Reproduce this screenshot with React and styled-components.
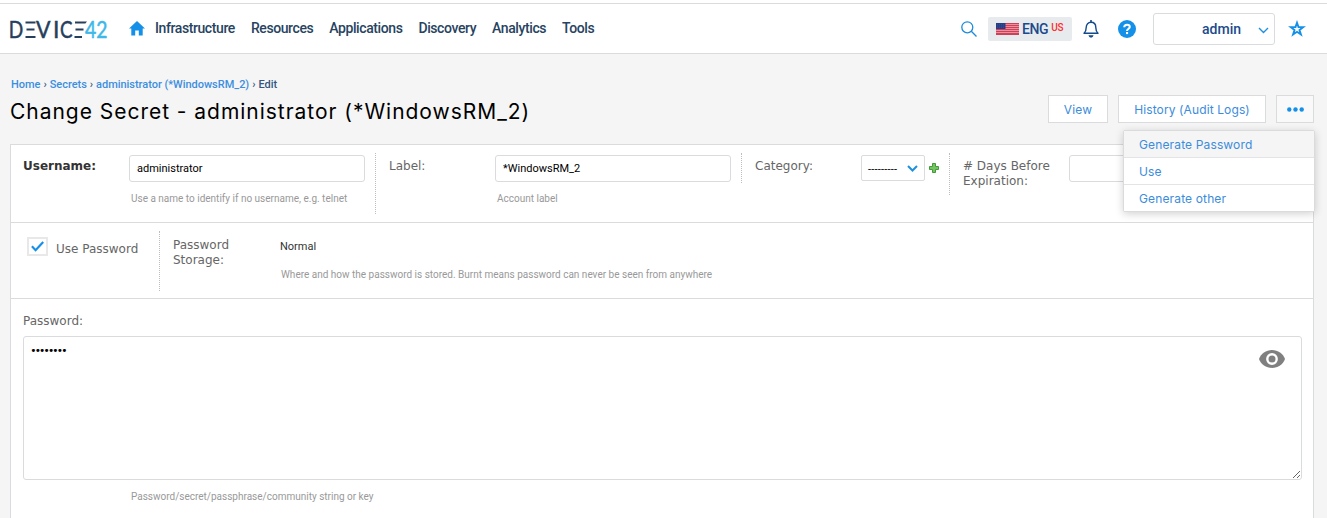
import React from 'react';
import styled, { createGlobalStyle } from 'styled-components';

const Global = createGlobalStyle`
  * { box-sizing: border-box; }
  html, body { margin: 0; height: 100%; overflow: hidden; background: #f5f5f5; }
  body { font-family: Roboto, sans-serif; color: #000; }
  svg { display: block; flex: none; }
  button, input, textarea { font-family: inherit; margin: 0; }
`;

const Page = styled.div`
  height: 518px;
  overflow: hidden;
  display: flex;
  flex-direction: column;
`;

const TopBar = styled.header`
  flex: none;
  height: 54px;
  display: flex;
  align-items: center;
  padding: 4px 21px 0 10px;
  background: linear-gradient(#fff 3px, #d9dbdc 3px, #d9dbdc 4px, #fff 4px);
  border-bottom: 1px solid #d9dbdc;
`;

const HomeLink = styled.a`
  margin: 0 10px 0 19px;
`;

const Nav = styled.nav`
  display: flex;
  gap: 16px;
  flex: 1;
  padding-bottom: 1px;
`;

const NavItem = styled.a`
  font-size: 14px;
  line-height: 18px;
  font-weight: 500;
  letter-spacing: -0.41px;
  color: #27435f;
`;

const Tools = styled.div`
  display: flex;
  align-items: center;
`;

const Language = styled.div`
  width: 84px;
  height: 24px;
  margin: 0 11px;
  padding-left: 8px;
  display: flex;
  align-items: center;
  background: #e8ebee;
  border-radius: 2px;
  font-size: 14px;
  line-height: 24px;
  font-weight: 500;
  letter-spacing: -0.4px;
  color: #1c4a8c;
`;

const LangCode = styled.span`
  margin-left: 3px;
`;

const Region = styled.span`
  margin: -2px 0 0 3px;
  font-size: 10px;
  letter-spacing: -0.3px;
  color: #ff2d2d;
`;

const HelpLink = styled.a`
  margin: 1px 17px 0 19px;
`;

const UserMenu = styled.button`
  width: 122px;
  height: 32px;
  margin-right: 13px;
  padding: 0 5px 0 48px;
  display: flex;
  align-items: center;
  justify-content: space-between;
  background: #fff;
  border: 1px solid #d9dbdc;
  border-radius: 3px;
  font-size: 14px;
  font-weight: 500;
  color: #1c4a8c;
`;

const MenuArrow = styled.span`
  margin-top: 4px;
`;

const Heading = styled.section`
  flex: none;
  height: 90px;
  display: flex;
  justify-content: space-between;
  padding: 23px 13px 0 11px;
`;

const Crumbs = styled.div`
  display: flex;
  gap: 3px;
  padding-top: 1px;
  font-size: 11px;
  line-height: 14px;
  font-weight: 500;
  letter-spacing: -0.03px;
  color: #33557f;
`;

const CrumbLink = styled.a`
  color: #3b8ee0;
`;

const Title = styled.h1`
  margin: 7px 0 0 -1px;
  font-family: Inter, sans-serif;
  font-size: 21px;
  line-height: 26px;
  font-weight: 400;
  letter-spacing: 0.97px;
  white-space: nowrap;
`;

const Actions = styled.div`
  position: relative;
  display: flex;
  align-items: flex-start;
  gap: 10px;
  padding-top: 18px;
`;

const ActionButton = styled.button`
  width: ${(p) => p.$width}px;
  height: 28px;
  padding: 0;
  display: flex;
  align-items: center;
  justify-content: center;
  background: ${(p) => (p.$open ? '#f9f9f9' : '#fff')};
  border: 1px solid #d9dbdc;
  font-family: Inter, sans-serif;
  font-size: 12px;
  letter-spacing: 0.12px;
  color: #3c8cdc;
`;

const Menu = styled.div`
  position: absolute;
  top: 53px;
  right: -1px;
  z-index: 2;
  width: 192px;
  background: #fff;
  border: 1px solid #d9dbdc;
  border-radius: 2px;
  box-shadow: 0 2px 8px rgba(0, 0, 0, 0.18);
`;

const MenuItem = styled.a`
  display: block;
  height: 27px;
  padding: 1px 0 0 15px;
  background: ${(p) => (p.$active ? '#f5f5f5' : '#fff')};
  font-family: Inter, sans-serif;
  font-size: 12px;
  line-height: 25px;
  letter-spacing: 0.14px;
  color: #3c8cdc;
  & + & { border-top: 1px solid #e2e4e5; }
  &:first-child { height: 26px; }
`;

const Card = styled.form`
  flex: none;
  height: 400px;
  margin: 0 13px 0 10px;
  background: #fff;
  border: 1px solid #d9dbdc;
`;

const FormRow = styled.div`
  height: ${(p) => p.$height}px;
  display: flex;
  align-items: flex-start;
  padding: 8px 0 0 12px;
  border-bottom: 1px solid #d9dbdc;
`;

const Field = styled.div`
  width: ${(p) => p.$width}px;
  height: ${(p) => p.$height}px;
  flex: none;
  margin-right: 13px;
  display: flex;
  align-items: flex-start;
  border-right: ${(p) => (p.$last ? 'none' : '1px dotted #bdbdbd')};
`;

const Label = styled.label`
  width: 106px;
  flex: none;
  padding-top: ${(p) => p.$top || 6}px;
  font-family: 'DejaVu Sans', sans-serif;
  font-size: 12px;
  line-height: 15px;
  font-weight: ${(p) => (p.$required ? 700 : 400)};
  color: ${(p) => (p.$required ? '#333' : '#666')};
`;

const Control = styled.div`
  padding-top: 2px;
`;

const TextInput = styled.input`
  display: block;
  width: 236px;
  height: 27px;
  padding: 0 7px;
  background: #fff;
  border: 1px solid #d9dbdc;
  border-radius: 3px;
  font-size: 11px;
  color: #000;
  outline: none;
`;

const Help = styled.p`
  margin: 11px 0 0 2px;
  font-size: 10px;
  line-height: 12px;
  color: #999;
  white-space: nowrap;
`;

const SelectRow = styled(Control)`
  display: flex;
  align-items: center;
  gap: 4px;
`;

const Select = styled.div`
  width: 64px;
  height: 26px;
  padding: 0 6px;
  display: flex;
  align-items: center;
  justify-content: space-between;
  border: 1px solid #d9dbdc;
  border-radius: 2px;
  font-size: 11px;
  letter-spacing: 0.2px;
`;

const SelectValue = styled.span`
  padding-top: 2px;
`;

const Checkbox = styled.span`
  width: 21px;
  height: 19px;
  margin: 6px 8px 0 4px;
  flex: none;
  display: flex;
  align-items: center;
  justify-content: center;
  border: 2px solid #e8e8e8;
`;

const CheckLabel = styled(Label)`
  width: auto;
`;

const Value = styled.div`
  padding-top: 9px;
  margin-left: 1px;
  font-size: 11px;
  line-height: 14px;
  color: #333;
`;

const StorageHelp = styled(Help)`
  margin: 15px 0 0 2px;
`;

const PasswordSection = styled.div`
  padding: 9px 11px 0 12px;
`;

const AreaWrap = styled.div`
  position: relative;
  margin-top: 7px;
`;

const PasswordArea = styled.textarea`
  display: block;
  width: 100%;
  height: 144px;
  padding: 7px 7px;
  background: #fff;
  border: 1px solid #d9dbdc;
  border-radius: 3px;
  font-size: 13px;
  line-height: 14px;
  font-weight: 700;
  letter-spacing: -0.25px;
  color: #000;
  outline: none;
`;

const RevealButton = styled.a`
  position: absolute;
  top: 14px;
  right: 17px;
`;

const PasswordHelp = styled(Help)`
  margin-left: 108px;
`;

const Logo = () => (
  <svg width="100" height="32" viewBox="0 -7 100 32" overflow="visible">
    <g fill="none" stroke="#263f5c" strokeWidth="2">
      <path d="M15.500 2.500H25.500M16.500 9.500H24.500M15.500 17H25.500" />
      <path d="M65.500 9.500H73.500M64.500 17H72" />
    </g>
    <path fill="#263f5c" d="M65 1.500H77L75.300 3.500H65Z" />
    <g fontFamily="Lato, sans-serif" fontSize="23" fill="#263f5c" stroke="#263f5c" strokeWidth=".5">
      <text x="-1.300" y="18" textLength="14.500" lengthAdjust="spacingAndGlyphs">D</text>
      <text x="26" y="18" textLength="14.500" lengthAdjust="spacingAndGlyphs">V</text>
      <text x="43" y="18">I</text>
      <text x="50" y="18" textLength="12.500" lengthAdjust="spacingAndGlyphs">C</text>
      <text x="75" y="18" fill="#3db8e8" stroke="#3db8e8" textLength="22.500" lengthAdjust="spacingAndGlyphs">42</text>
    </g>
  </svg>
);

const HomeIcon = () => (
  <svg width="16" height="15" viewBox="0 0 16 15">
    <path fill="#1590e8" d="M8 0 16 7.500H13.700V14.500H9.800V9.500H6.200V14.500H2.300V7.500H0Z" />
  </svg>
);

const SearchIcon = () => (
  <svg width="16" height="16" viewBox="0 0 16 16" fill="none" stroke="#1e8bdc" strokeWidth="1.3">
    <circle cx="6.300" cy="6.300" r="5.500" />
    <path d="m10.300 10.300 5.200 5.200" />
  </svg>
);

const FlagIcon = () => (
  <svg width="23" height="12" viewBox="0 0 23 12">
    <rect width="23" height="12" fill="#e9909c" />
    <path stroke="#cf4058" strokeWidth="1" d="M0 .5H23M0 2.500H23M0 4.500H23M0 6.500H23M0 8.500H23M0 10.500H23M0 11.500H23" />
    <rect width="9.500" height="6" fill="#254088" />
    <path stroke="#3c5294" strokeWidth=".6" strokeDasharray="1 1" d="M1 1.500H9M1 3H9M1 4.500H9" />
  </svg>
);

const BellIcon = () => (
  <svg width="16" height="18" viewBox="0 0 16 18">
    <path fill="none" stroke="#124a8c" strokeWidth="1.4" strokeLinejoin="round" d="M1 13.300C3 11.500 3.200 9.500 3.200 7.500 3.200 4.300 5.200 2.300 8 2.300s4.800 2 4.800 5.200c0 2 .2 4 2.200 5.800Z" />
    <path fill="#124a8c" d="M7.200 0h1.600v2.500H7.200ZM5.500 15.300h5c-.3 1.500-1.300 2.300-2.500 2.300s-2.200-.8-2.500-2.300Z" />
  </svg>
);

const HelpIcon = () => (
  <svg width="18" height="18" viewBox="0 0 18 18">
    <circle cx="9" cy="9" r="9" fill="#1590e8" />
    <path fill="none" stroke="#fff" strokeWidth="2" d="M6.200 7.300C6.300 5.500 7.400 4.700 9 4.700s2.800.9 2.800 2.300C11.800 8.700 9 8.800 9 11" />
    <rect x="8" y="12" width="2.100" height="2.100" fill="#fff" />
  </svg>
);

const Chevron = ({ stroke }) => (
  <svg width="11" height="7" viewBox="0 0 11 7" fill="none" stroke="#1e90e0" strokeWidth={stroke}>
    <path d="m1 1 4.500 4.500L10 1" />
  </svg>
);

const StarIcon = () => (
  <svg width="18" height="17" viewBox="0 0 18 17">
    <path
      fill="none"
      stroke="#1590e8"
      strokeWidth="1.900"
      d="m9 2.800 1.500 4.300h4.700l-3.700 2.900 1.400 4.500L9 11.800l-3.900 2.700 1.400-4.500-3.700-2.900h4.700Z"
    />
  </svg>
);

const DotsIcon = () => (
  <svg width="17" height="5" viewBox="0 0 17 5" fill="#1590e8">
    <circle cx="2.300" cy="2.500" r="2.200" />
    <circle cx="8.500" cy="2.500" r="2.200" />
    <circle cx="14.700" cy="2.500" r="2.200" />
  </svg>
);

const PlusIcon = () => (
  <svg width="10" height="10" viewBox="0 0 10 10">
    <path fill="#74c35e" stroke="#3f9a3a" d="M3.500.5h3v3h3v3h-3v3h-3v-3h-3v-3h3Z" />
  </svg>
);

const CheckIcon = () => (
  <svg width="13" height="11" viewBox="0 0 13 11" fill="none" stroke="#1590e8" strokeWidth="2.200">
    <path d="m.9 5.300 3.700 3.900L12.200 1" />
  </svg>
);

const EyeIcon = () => (
  <svg width="26" height="18" viewBox="0 0 26 18">
    <path fill="#808080" d="M13 0C7 0 2 3.700 0 9c2 5.300 7 9 13 9s11-3.700 13-9C24 3.700 19 0 13 0Z" />
    <circle cx="13" cy="9" r="4.700" fill="#808080" stroke="#fff" strokeWidth="2.400" />
  </svg>
);

const NAV = ['Infrastructure', 'Resources', 'Applications', 'Discovery', 'Analytics', 'Tools'];
const CRUMBS = ['Home', 'Secrets', 'administrator (*WindowsRM_2)'];
const MENU = ['Generate Password', 'Use', 'Generate other'];

export default function App() {
  return (
    <Page>
      <Global />
      <TopBar>
        <Logo />
        <HomeLink><HomeIcon /></HomeLink>
        <Nav>{NAV.map((item) => <NavItem key={item}>{item}</NavItem>)}</Nav>
        <Tools>
          <SearchIcon />
          <Language>
            <FlagIcon />
            <LangCode>ENG</LangCode>
            <Region>US</Region>
          </Language>
          <BellIcon />
          <HelpLink><HelpIcon /></HelpLink>
          <UserMenu type="button">
            admin
            <MenuArrow><Chevron stroke={1.4} /></MenuArrow>
          </UserMenu>
          <StarIcon />
        </Tools>
      </TopBar>

      <Heading>
        <div>
          <Crumbs>
            {CRUMBS.map((crumb) => (
              <React.Fragment key={crumb}>
                <CrumbLink>{crumb}</CrumbLink>
                <span>›</span>
              </React.Fragment>
            ))}
            <span>Edit</span>
          </Crumbs>
          <Title>Change Secret - administrator (*WindowsRM_2)</Title>
        </div>
        <Actions>
          <ActionButton type="button" $width={60}>View</ActionButton>
          <ActionButton type="button" $width={148}>History (Audit Logs)</ActionButton>
          <ActionButton type="button" $width={38} $open><DotsIcon /></ActionButton>
          <Menu>
            {MENU.map((item, i) => <MenuItem key={item} $active={i === 0}>{item}</MenuItem>)}
          </Menu>
        </Actions>
      </Heading>

      <Card>
        <FormRow $height={78}>
          <Field $width={353} $height={61}>
            <Label $required>Username:</Label>
            <Control>
              <TextInput defaultValue="administrator" />
              <Help>Use a name to identify if no username, e.g. telnet</Help>
            </Control>
          </Field>
          <Field $width={353} $height={30}>
            <Label>Label:</Label>
            <Control>
              <TextInput defaultValue="*WindowsRM_2" />
              <Help>Account label</Help>
            </Control>
          </Field>
          <Field $width={195} $height={42}>
            <Label>Category:</Label>
            <SelectRow>
              <Select>
                <SelectValue>---------</SelectValue>
                <Chevron stroke={2} />
              </Select>
              <PlusIcon />
            </SelectRow>
          </Field>
          <Field $width={342} $height={42} $last>
            <Label># Days Before Expiration:</Label>
            <Control><TextInput /></Control>
          </Field>
        </FormRow>

        <FormRow $height={76}>
          <Field $width={137} $height={60}>
            <Checkbox><CheckIcon /></Checkbox>
            <CheckLabel $top={11}>Use Password</CheckLabel>
          </Field>
          <Field $width={600} $height={60} $last>
            <Label $top={7}>Password Storage:</Label>
            <div>
              <Value>Normal</Value>
              <StorageHelp>
                Where and how the password is stored. Burnt means password can never be seen from anywhere
              </StorageHelp>
            </div>
          </Field>
        </FormRow>

        <PasswordSection>
          <Label as="div">Password:</Label>
          <AreaWrap>
            <PasswordArea defaultValue="••••••••" />
            <RevealButton><EyeIcon /></RevealButton>
          </AreaWrap>
          <PasswordHelp>Password/secret/passphrase/community string or key</PasswordHelp>
        </PasswordSection>
      </Card>
    </Page>
  );
}
